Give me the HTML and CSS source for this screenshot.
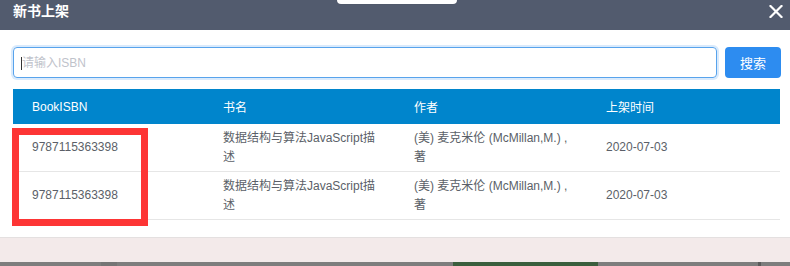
FILE: index.html
```html
<!DOCTYPE html>
<html lang="zh-CN">
<head>
<meta charset="utf-8">
<title>新书上架</title>
<link rel="stylesheet" href="styles.css">
</head>
<body>
<div class="page">
  <div class="dlg-head">
    <h1 class="dlg-title">新书上架</h1>
    <span class="dlg-close">
      <svg width="14" height="13" viewBox="0 0 14 13"><path d="M1.5 1 L12.5 12 M12.5 1 L1.5 12" stroke="#fff" stroke-width="2.2" stroke-linecap="square" fill="none"/></svg>
    </span>
  </div>
  <div class="tab"></div>
  <div class="dlg-body">
    <div class="search">
      <div class="search-input"><span class="caret"></span><input type="text" placeholder="请输入ISBN"></div>
      <button class="search-btn" type="button">搜索</button>
    </div>
    <table class="books">
      <colgroup><col class="c1"><col class="c2"><col class="c3"><col class="c4"></colgroup>
      <thead>
        <tr><th>BookISBN</th><th>书名</th><th>作者</th><th>上架时间</th></tr>
      </thead>
      <tbody>
        <tr><td>9787115363398</td><td>数据结构与算法JavaScript描述</td><td>(美) 麦克米伦 (McMillan,M.) , 著</td><td>2020-07-03</td></tr>
        <tr><td>9787115363398</td><td>数据结构与算法JavaScript描述</td><td>(美) 麦克米伦 (McMillan,M.) , 著</td><td>2020-07-03</td></tr>
      </tbody>
    </table>
  </div>
  <div class="dlg-foot"></div>
  <div class="backdrop">
    <span class="patch patch-a"></span>
    <span class="patch patch-b"></span>
    <span class="patch patch-c"></span>
  </div>
  <div class="mark"></div>
</div>
</body>
</html>
```
FILE: styles.css
```css
html, body {
  margin: 0;
  padding: 0;
  background: #fff;
}
.page {
  position: relative;
  width: 790px;
  height: 266px;
  overflow: hidden;
  font-family: "Liberation Sans", "Noto Sans CJK SC", sans-serif;
}
.dlg-head {
  height: 30px;
  background: #525b6e;
  display: flex;
  justify-content: space-between;
}
.dlg-title {
  margin: 0;
  padding-left: 13px;
  font-size: 14px;
  line-height: 22px;
  font-weight: bold;
  color: #fff;
}
.dlg-close {
  padding: 5px 7px 0 0;
  height: 13px;
}
.dlg-close svg { display: block; }
.tab {
  position: absolute;
  left: 337px;
  top: 0;
  width: 120px;
  height: 4px;
  background: #fff;
  border-radius: 0 0 4px 4px;
  box-shadow: 0 0 1px rgba(0,0,0,0.2);
}
.dlg-body {
  height: 207px;
  padding: 17px 9px 0 13px;
  box-sizing: border-box;
  background: #fff;
}
.search {
  display: flex;
  gap: 8px;
  height: 31px;
}
.search-input {
  position: relative;
  flex: 1;
  border: 1px solid #58a3ec;
  border-radius: 4px;
  box-shadow: 0 0 0 2px rgba(45, 140, 240, 0.18);
  display: flex;
}
.search-input input {
  flex: 1;
  border: 0;
  outline: none;
  background: transparent;
  padding: 0 0 0 8px;
  font: 12px "Liberation Sans", "Noto Sans CJK SC", sans-serif;
  color: #333;
}
.search-input input::placeholder { color: #bfc3cb; }
.caret {
  position: absolute;
  left: 7px;
  top: 9px;
  width: 1px;
  height: 13px;
  background: #333;
}
.search-btn {
  width: 56px;
  border: 0;
  border-radius: 4px;
  background: #2d8cf0;
  color: #fff;
  font: 13px "Liberation Sans", "Noto Sans CJK SC", sans-serif;
  padding: 0;
}
.books {
  margin-top: 11px;
  width: 767px;
  border-collapse: collapse;
  table-layout: fixed;
  font-size: 12px;
}
.books .c1, .books .c2 { width: 191px; }
.books .c3 { width: 192px; }
.books .c4 { width: 193px; }
.books th {
  height: 35px;
  padding: 0 19px;
  background: #0085cc;
  color: #fff;
  font-weight: normal;
  text-align: left;
}
.books td {
  padding: 5px 19px;
  line-height: 18.5px;
  color: #5b5f68;
  border-bottom: 1px solid #e6e6e6;
}
.dlg-foot {
  height: 25px;
  box-sizing: border-box;
  border-top: 1px solid #e4e0e0;
  background: #f3eaea;
}
.backdrop {
  position: relative;
  height: 4px;
  background: #7d7d7d;
}
.patch {
  position: absolute;
  top: 0;
  height: 4px;
}
.patch-a { left: 101px; width: 16px; background: #757575; }
.patch-b { left: 453px; width: 145px; background: #3b5e3d; }
.patch-c { left: 758px; width: 3px; background: #5a5a5a; }
.mark {
  position: absolute;
  left: 12px;
  top: 128px;
  width: 136px;
  height: 98px;
  box-sizing: border-box;
  border: 7px solid #fd3535;
}
```
